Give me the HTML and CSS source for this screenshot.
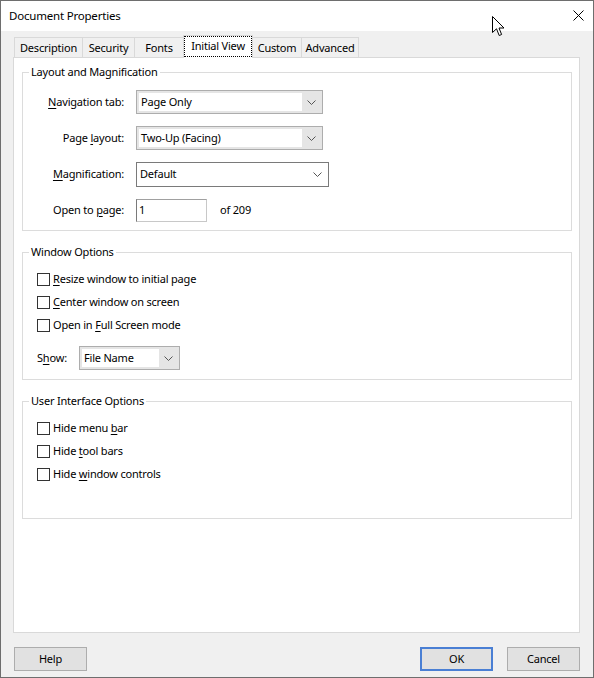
FILE: index.html
```html
<!DOCTYPE html>
<html>
<head>
<meta charset="utf-8">
<link rel="stylesheet" href="styles.css">
</head>
<body>
<div class="window">
  <div class="titlebar">
    <span class="title">Document Properties</span>
    <svg class="close" width="11" height="11" viewBox="0 0 11 11"><path d="M0.5 0.5 L10.5 10.5 M10.5 0.5 L0.5 10.5" stroke="#000" stroke-width="1" fill="none"/></svg>
  </div>
  <div class="content">
    <div class="tabs">
      <div class="tab w-desc">Description</div>
      <div class="tab w-sec">Security</div>
      <div class="tab w-fonts">Fonts</div>
      <div class="tab selected w-init"><span class="focus">Initial View</span></div>
      <div class="tab w-custom">Custom</div>
      <div class="tab w-adv">Advanced</div>
    </div>
    <div class="panel">
      <fieldset class="group g1">
        <legend>Layout and Magnification</legend>
        <div class="form">
          <label class="lbl"><u>N</u>avigation tab:</label>
          <div class="combo gray w-nav"><span class="val">Page Only</span><span class="arrow"><svg width="9" height="5" viewBox="0 0 9 5"><path d="M0.5 0.5 L4.5 4.5 L8.5 0.5" stroke="#555" fill="none"/></svg></span></div>
          <label class="lbl">Page <u>l</u>ayout:</label>
          <div class="combo gray w-nav"><span class="val">Two-Up (Facing)</span><span class="arrow"><svg width="9" height="5" viewBox="0 0 9 5"><path d="M0.5 0.5 L4.5 4.5 L8.5 0.5" stroke="#555" fill="none"/></svg></span></div>
          <label class="lbl"><u>M</u>agnification:</label>
          <div class="combo white w-mag"><span class="val">Default</span><span class="arrow"><svg width="9" height="5" viewBox="0 0 9 5"><path d="M0.5 0.5 L4.5 4.5 L8.5 0.5" stroke="#555" fill="none"/></svg></span></div>
          <label class="lbl">Open to <u>p</u>age:</label>
          <div class="pagerow"><span class="input">1</span><span class="of">of 209</span></div>
        </div>
      </fieldset>
      <fieldset class="group g2">
        <legend>Window Options</legend>
        <div class="inner">
          <div class="checks">
            <div class="check"><span class="box"></span><span><u>R</u>esize window to initial page</span></div>
            <div class="check"><span class="box"></span><span><u>C</u>enter window on screen</span></div>
            <div class="check"><span class="box"></span><span>Open in <u>F</u>ull Screen mode</span></div>
          </div>
          <div class="showrow">
            <span class="showlbl">S<u>h</u>ow:</span>
            <div class="combo gray w-show"><span class="val">File Name</span><span class="arrow"><svg width="9" height="5" viewBox="0 0 9 5"><path d="M0.5 0.5 L4.5 4.5 L8.5 0.5" stroke="#555" fill="none"/></svg></span></div>
          </div>
        </div>
      </fieldset>
      <fieldset class="group g3">
        <legend>User Interface Options</legend>
        <div class="inner">
          <div class="checks">
            <div class="check"><span class="box"></span><span>Hide menu <u>b</u>ar</span></div>
            <div class="check"><span class="box"></span><span>Hide <u>t</u>ool bars</span></div>
            <div class="check"><span class="box"></span><span>Hide <u>w</u>indow controls</span></div>
          </div>
        </div>
      </fieldset>
    </div>
    <div class="footer">
      <div class="btn">Help</div>
      <div class="spacer"></div>
      <div class="btn default">OK</div>
      <div class="btn">Cancel</div>
    </div>
  </div>
  <svg class="cursor" width="13" height="21" viewBox="0 0 13 21"><path d="M0.5 0.5 L0.5 16.5 L4.5 12.8 L7.2 19.5 L9.6 18.5 L7 12 L12 12 Z" fill="#fff" stroke="#000" stroke-width="1" stroke-linejoin="miter"/></svg>
</div>
</body>
</html>
```
FILE: styles.css
```css
html, body {
  margin: 0;
  padding: 0;
  background: #fff;
}
body {
  font-family: "Noto Sans", "Open Sans", sans-serif;
  font-size: 11px;
  line-height: 16px;
  letter-spacing: -0.2px;
  color: #000;
}
u { text-decoration: underline; text-underline-offset: 2px; }
.window {
  position: relative;
  width: 594px;
  height: 678px;
  box-sizing: border-box;
  border: 1px solid #6e6e6e;
  display: flex;
  flex-direction: column;
  background: #f0f0f0;
  overflow: hidden;
}
.titlebar {
  height: 30px;
  background: #fff;
  display: flex;
  align-items: center;
  justify-content: space-between;
  padding: 0 9px 0 8px;
  flex: none;
}
.title { font-size: 11.5px; }
.close { margin-top: -1px; }
.content {
  flex: 1;
  display: flex;
  flex-direction: column;
  padding: 4px 13px 0 12px;
}
.tabs {
  display: flex;
  align-items: flex-end;
  height: 22px;
  padding-left: 1px;
  flex: none;
}
.tab {
  box-sizing: border-box;
  height: 20px;
  border: 1px solid #d9d9d9;
  border-bottom: none;
  margin-right: -1px;
  display: flex;
  align-items: center;
  justify-content: center;
  background: #f0f0f0;
}
.tab.selected {
  position: relative;
  z-index: 1;
  height: 23px;
  margin-bottom: -1px;
  background: #fff;
  align-items: flex-start;
  padding-top: 1px;
}
.focus {
  display: block;
  outline: 1px dotted #000;
  outline-offset: 0;
  padding: 1px 2px 2px;
  width: 62px;
  text-align: center;
}
.w-desc { width: 69px; }
.w-sec { width: 53px; }
.w-fonts { width: 50px; }
.w-init { width: 70px; }
.w-custom { width: 50px; }
.w-adv { width: 58px; }
.panel {
  flex: none;
  height: 576px;
  box-sizing: border-box;
  background: #fff;
  border: 1px solid #d9d9d9;
  padding: 0 7px 0 8px;
}
.group {
  margin: 13px 0 0;
  padding: 0;
  border: 1px solid #dcdcdc;
  min-width: 0;
}
.group.g1 { margin-top: 6px; padding-bottom: 8px; }
.group.g2 { padding-bottom: 9px; }
.group.g3 { padding-bottom: 36px; }
.inner { padding-left: 14px; }
legend {
  margin-left: 6px;
  padding: 0 2px;
  line-height: 16px;
}
.form {
  margin-top: 10px;
  display: grid;
  grid-template-columns: 101px auto;
  grid-auto-rows: 24px;
  column-gap: 12px;
  row-gap: 12px;
  justify-items: start;
  align-items: center;
}
.lbl { justify-self: end; }
.combo {
  box-sizing: border-box;
  height: 24px;
  display: flex;
}
.combo.gray {
  border: 1px solid #adadad;
  background: #e5e5e5;
  padding: 2px 1px 2px 2px;
}
.combo.white {
  border: 1px solid #7a7a7a;
  background: #fff;
  padding: 0 1px 0 0;
}
.combo .val {
  flex: 1;
  background: #fff;
  display: flex;
  align-items: center;
  padding-left: 2px;
}
.combo.white .val { padding-left: 3px; }
.combo .arrow {
  width: 19px;
  display: flex;
  align-items: center;
  justify-content: center;
  padding-top: 1px;
}
.w-nav { width: 187px; }
.w-mag { width: 193px; height: 25px; }
.w-show { width: 101px; }
.pagerow {
  display: flex;
  align-items: center;
}
.input {
  box-sizing: border-box;
  width: 71px;
  height: 23px;
  border: 1px solid #c8c8c8;
  border-left-color: #7a7a7a;
  border-top-color: #a0a0a0;
  padding-left: 2px;
  display: flex;
  align-items: center;
}
.of { margin-left: 13px; }
.checks {
  margin-top: 11px;
  display: flex;
  flex-direction: column;
  gap: 7px;
}
.check {
  display: flex;
  align-items: center;
  height: 16px;
}
.box {
  box-sizing: border-box;
  width: 13px;
  height: 13px;
  border: 1px solid #333;
  background: #fff;
  margin-right: 3px;
  flex: none;
}
.showrow {
  margin-top: 13px;
  display: flex;
  align-items: center;
}
.showlbl { width: 42px; }
.footer {
  flex: 1;
  display: flex;
  align-items: flex-start;
  padding: 14px 0 0 1px;
  gap: 14px;
}
.spacer { flex: 1; }
.btn {
  box-sizing: border-box;
  width: 73px;
  height: 24px;
  border: 1px solid #adadad;
  background: #e1e1e1;
  display: flex;
  align-items: center;
  justify-content: center;
}
.btn.default { border: 2px solid #4a7fd4; }
.cursor {
  position: absolute;
  left: 491px;
  top: 15px;
}
```
